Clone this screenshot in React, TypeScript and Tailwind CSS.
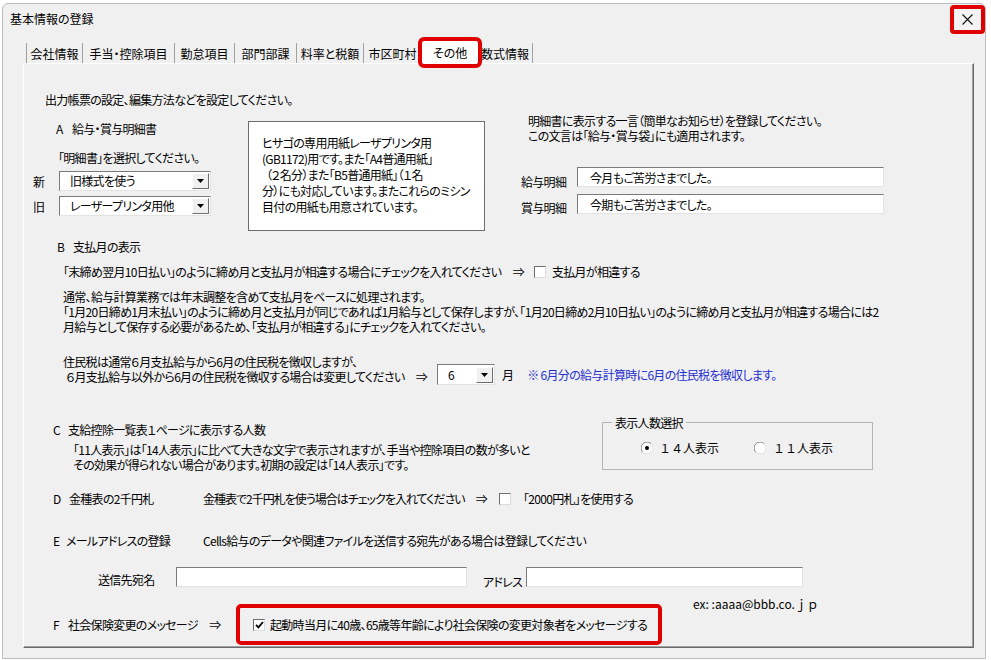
import React from 'react';

const sunken =
  'border border-t-[#7a7a7a] border-l-[#7a7a7a] border-r-[#e3e3e3] border-b-[#e3e3e3] bg-white';

function Combo({ value, className }: { value: string; className: string }) {
  return (
    <div className={`flex items-center ${sunken} ${className}`}>
      <span className="flex-1 pl-[10px] leading-none">{value}</span>
      <span className="mr-[1px] flex h-[16px] w-[17px] items-center justify-center border border-t-white border-l-white border-r-[#6d6d6d] border-b-[#6d6d6d] bg-[#f0f0f0]">
        <svg width="7" height="4" viewBox="0 0 7 4">
          <path d="M0 0h7L3.5 4z" fill="#000" />
        </svg>
      </span>
    </div>
  );
}

function Check({ checked }: { checked?: boolean }) {
  return (
    <span className="flex h-[12px] w-[12px] shrink-0 items-center justify-center border border-t-[#6d6d6d] border-l-[#6d6d6d] border-r-[#dcdcdc] border-b-[#dcdcdc] bg-white">
      {checked && (
        <svg width="9" height="8" viewBox="0 0 9 8">
          <path d="M1 3.8l2.4 2.6L8 1" stroke="#000" strokeWidth="1.8" fill="none" />
        </svg>
      )}
    </span>
  );
}

function Radio({ on }: { on?: boolean }) {
  return (
    <svg width="12" height="12" viewBox="0 0 12 12" className="shrink-0">
      <circle cx="6" cy="6" r="5.5" fill="#fff" />
      <path d="M1.8 10.2A5.5 5.5 0 0 1 10.2 1.8" stroke="#8a8a8a" fill="none" />
      <path d="M10.2 1.8A5.5 5.5 0 0 1 1.8 10.2" stroke="#e0e0e0" fill="none" />
      {on && <circle cx="6" cy="6" r="2" fill="#000" />}
    </svg>
  );
}

// tab label + width (border included), as measured on the dialog
const tabs: [string, string][] = [
  ['会社情報', 'w-[57px] border-l'],
  ['手当・控除項目', 'w-[92px]'],
  ['勤怠項目', 'w-[60px]'],
  ['部門部課', 'w-[62px]'],
  ['料率と税額', 'w-[67px]'],
  ['市区町村', 'w-[58px]'],
  ['その他', 'w-[56px]'],
  ['数式情報', 'w-[55px]'],
];

export default function App() {
  return (
    <div className="h-[660px] w-[991px] overflow-hidden bg-white font-['Noto_Sans_CJK_JP',sans-serif] text-[12px] leading-[15px] text-black [font-feature-settings:'palt']">
      <div className="ml-[2px] mt-[3px] h-[656px] w-[984px] rounded-t-[6px] border border-[#bcbcbc] bg-[#f0f0f0]">
        {/* title bar */}
        <div className="flex h-[37px] items-start justify-between">
          <div className="pl-[7px] pt-[7px]">基本情報の登録</div>
          <div className="mt-[1px] flex h-[29px] w-[35px] items-center justify-center rounded-[4px] border-[4px] border-[#e00000] bg-[#f3f3f3]">
            <svg width="11" height="11" viewBox="0 0 11 11">
              <path d="M0.5 0.5l10 10M10.5 0.5l-10 10" stroke="#111" strokeWidth="1.1" />
            </svg>
          </div>
        </div>

        {/* tabs */}
        <div className="flex h-[22px] items-end pl-[23px]">
          {tabs.map(([t, w]) =>
            t === 'その他' ? (
              <div
                key={t}
                className={`relative z-10 -mb-[1px] flex h-[23px] items-center justify-center rounded-[2px] bg-white outline-[4px] outline-solid outline-[#e00000] ${w}`}
              >
                {t}
              </div>
            ) : (
              <div
                key={t}
                className={`flex h-[20px] items-center justify-center border-r border-[#a0a0a0] ${w}`}
              >
                {t}
              </div>
            )
          )}
        </div>

        {/* panel */}
        <div className="ml-[20px] h-[585px] w-[951px] border border-t-white border-l-white border-r-[#696969] border-b-[#696969] tracking-[-0.7px] shadow-[inset_-1px_-1px_0_#a0a0a0]">
          <div className="mt-[28px] pl-[21px]">出力帳票の設定、編集方法などを設定してください。</div>

          {/* A */}
          <div className="mt-[6px] flex">
            <div className="w-[224px] pl-[9px]">
              <div className="ml-[23px] mt-[8px]">
                <span className="inline-block w-[16px]">A</span>給与・賞与明細書
              </div>
              <div className="ml-[25px] mt-[14px]">「明細書」を選択してください。</div>
              <div className="mt-[6px] flex items-center">
                <span className="w-[26px]">新</span>
                <Combo value="旧様式を使う" className="h-[20px] w-[152px]" />
              </div>
              <div className="mt-[5px] flex items-center">
                <span className="w-[26px]">旧</span>
                <Combo value="レーザープリンタ用他" className="h-[20px] w-[152px]" />
              </div>
            </div>
            <div className="mt-[8px] h-[110px] w-[237px] border border-[#6d6d6d] bg-white pl-[13px] pt-[13px] leading-[16px]">
              <div>ヒサゴの専用用紙レーザプリンタ用</div>
              <div>(GB1172)用です。また「A4普通用紙」</div>
              <div className="pl-[4px]">（２名分）また「B5普通用紙」（１名</div>
              <div>分）にも対応しています。またこれらのミシン</div>
              <div>目付の用紙も用意されています。</div>
            </div>
            <div className="ml-[36px]">
              <div className="pl-[7px]">明細書に表示する一言（簡単なお知らせ）を登録してください。</div>
              <div className="pl-[7px]">この文言は「給与・賞与袋」にも適用されます。</div>
              <div className="mt-[24px] flex items-start">
                <span className="mt-[7px] w-[56px]">給与明細</span>
                <div className={`flex h-[20px] w-[307px] items-center pl-[12px] ${sunken}`}>今月もご苦労さまでした。</div>
              </div>
              <div className="mt-[5px] flex items-start">
                <span className="mt-[6px] w-[56px]">賞与明細</span>
                <div className={`flex h-[20px] w-[307px] items-center pl-[12px] ${sunken}`}>今期もご苦労さまでした。</div>
              </div>
            </div>
          </div>

          {/* B */}
          <div className="mt-[8px] pl-[33px]">
            <span className="inline-block w-[16px]">B</span>支払月の表示
          </div>
          <div className="mt-[10px] flex items-center pl-[39px]">
            <span className="w-[471px] whitespace-nowrap">
              「末締め翌月10日払い」のように締め月と支払月が相違する場合にチェックを入れてください　⇒
            </span>
            <Check />
            <span className="ml-[6px]">支払月が相違する</span>
          </div>
          <div className="mt-[10px] whitespace-nowrap pl-[39px]">
            <div>通常、給与計算業務では年末調整を含めて支払月をベースに処理されます。</div>
            <div>
              「1月20日締め1月末払い」のように締め月と支払月が同じであれば1月給与として保存しますが、「1月20日締め2月10日払い」のように締め月と支払月が相違する場合には2
            </div>
            <div>月給与として保存する必要があるため、「支払月が相違する」にチェックを入れてください。</div>
          </div>
          <div className="mt-[20px] flex items-end whitespace-nowrap pl-[39px]">
            <div className="w-[374px]">
              <div>住民税は通常６月支払給与から6月の住民税を徴収しますが、</div>
              <div className="pl-[3px]">６月支払給与以外から6月の住民税を徴収する場合は変更してください　⇒</div>
            </div>
            <Combo value="6" className="-mb-[1px] h-[21px] w-[58px]" />
            <span className="mb-[2px] ml-[7px]">月</span>
            <span className="mb-[2px] ml-[14px] text-[#1f2fd0]">※ 6月分の給与計算時に6月の住民税を徴収します。</span>
          </div>

          {/* C */}
          <div className="mt-[31px] flex pl-[29px]">
            <div className="w-[549px] whitespace-nowrap">
              <div className="mt-[7px]">
                <span className="inline-block w-[15px]">C</span>支給控除一覧表１ページに表示する人数
              </div>
              <div className="mt-[5px] pl-[20px]">
                <div>「11人表示」は「14人表示」に比べて大きな文字で表示されますが、手当や控除項目の数が多いと</div>
                <div>その効果が得られない場合があります。初期の設定は「14人表示」です。</div>
              </div>
            </div>
            <fieldset className="h-[55px] w-[271px] border border-[#b4b4b4] pl-[9px]">
              <legend className="px-[3px]">表示人数選択</legend>
              <div className="mt-[10px] flex items-center pl-[29px] tracking-normal [font-feature-settings:normal]">
                <Radio on />
                <span className="ml-[6px]">１４人表示</span>
                <span className="ml-[35px]">
                  <Radio />
                </span>
                <span className="ml-[7px]">１１人表示</span>
              </div>
            </fieldset>
          </div>

          {/* D */}
          <div className="mt-[19px] flex items-center whitespace-nowrap pl-[29px]">
            <span className="w-[150px]">
              <span className="inline-block w-[16px]">D</span>金種表の2千円札
            </span>
            <span className="w-[296px] tracking-[-1px]">金種表で2千円札を使う場合はチェックを入れてください　⇒</span>
            <Check />
            <span className="ml-[12px]">「2000円札」を使用する</span>
          </div>

          {/* E */}
          <div className="mt-[27px] flex whitespace-nowrap pl-[29px]">
            <span className="w-[150px]">
              <span className="inline-block w-[13px]">E</span>メールアドレスの登録
            </span>
            <span>Cells給与のデータや関連ファイルを送信する宛先がある場合は登録してください</span>
          </div>
          <div className="mt-[19px] flex items-start pl-[74px]">
            <span className="mt-[5px] w-[78px]">送信先宛名</span>
            <div className={`h-[20px] w-[291px] ${sunken}`} />
            <span className="ml-[16px] mt-[7px] w-[43px]">アドレス</span>
            <div className={`h-[20px] w-[277px] ${sunken}`} />
          </div>
          <div className="mt-[7px] h-[15px] pl-[669px] tracking-normal [font-feature-settings:normal]">ex: :aaaa@bbb.co.ｊｐ</div>

          {/* F */}
          <div className="-mt-[7px] flex items-center whitespace-nowrap pl-[29px]">
            <span className="w-[183px]">
              <span className="inline-block w-[15px]">F</span>社会保険変更のメッセージ　⇒
            </span>
            <div className="flex h-[41px] w-[426px] items-center rounded-[5px] border-[4px] border-[#e00000] pl-[13px]">
              <Check checked />
              <span className="ml-[5px]">起動時当月に40歳、65歳等年齢により社会保険の変更対象者をメッセージする</span>
            </div>
          </div>
        </div>
      </div>
    </div>
  );
}
